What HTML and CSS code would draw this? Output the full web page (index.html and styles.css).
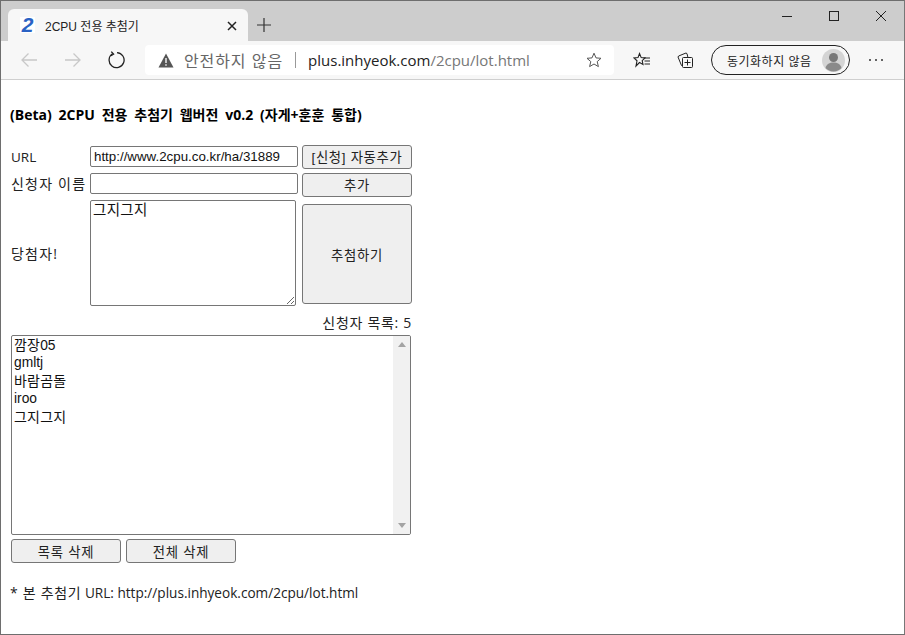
FILE: index.html
```html
<!DOCTYPE html>
<html lang="ko">
<head>
<meta charset="utf-8">
<title>2CPU 전용 추첨기</title>
<link rel="stylesheet" href="styles.css">
</head>
<body>
<div class="window">
  <div class="tabstrip">
    <div class="tab">
      <span class="favicon">2</span>
      <span class="tab-title">2CPU 전용 추첨기</span>
      <svg class="tab-close" width="10" height="10" viewBox="0 0 10 10"><path d="M1 1l8 8M9 1l-8 8" stroke="#222" stroke-width="1.5" fill="none"/></svg>
    </div>
    <svg class="newtab" width="14" height="14" viewBox="0 0 14 14"><path d="M7 0v14M0 7h14" stroke="#333" stroke-width="1.2" fill="none"/></svg>
    <div class="winctl">
      <svg width="12" height="12" viewBox="0 0 12 12"><path d="M1 6.500h10" stroke="#222" stroke-width="1"/></svg>
      <svg width="12" height="12" viewBox="0 0 12 12"><rect x="1.500" y="1.500" width="9" height="9" fill="none" stroke="#222" stroke-width="1"/></svg>
      <svg width="12" height="12" viewBox="0 0 12 12"><path d="M1 1l10 10M11 1L1 11" stroke="#222" stroke-width="1" fill="none"/></svg>
    </div>
  </div>
  <div class="toolbar">
    <svg class="nav-back" width="18" height="16" viewBox="0 0 18 16"><path d="M17 8H2M8.500 1.500L2 8l6.500 6.500" stroke="#c8c8c8" stroke-width="1.300" fill="none"/></svg>
    <svg class="nav-fwd" width="18" height="16" viewBox="0 0 18 16"><path d="M1 8h15M9.500 1.500L16 8l-6.500 6.500" stroke="#c8c8c8" stroke-width="1.300" fill="none"/></svg>
    <svg class="nav-reload" width="18" height="18" viewBox="0 0 18 18"><path d="M5.500 2.800A7.500 7.500 0 1 0 10 1.600" stroke="#222" stroke-width="1.300" fill="none"/><path d="M4.300 0.600L6.600 3.200 4 4.800" stroke="#222" stroke-width="1.300" fill="none"/></svg>
    <div class="addressbar">
      <svg width="16" height="15" viewBox="0 0 16 15"><path d="M8 0.500L15.500 14.500H.5z" fill="#555"/><path d="M8 5v5M8 11.300v1.500" stroke="#f7f7f7" stroke-width="1.400"/></svg>
      <span class="insecure">안전하지 않음</span>
      <span class="divider"></span>
      <span class="url">plus.inhyeok.com<span class="url-path">/2cpu/lot.html</span></span>
      <svg class="star" width="16" height="16" viewBox="0 0 16 16"><path d="M8 1.200l2 4.700 5 .4-3.800 3.300 1.200 5L8 12l-4.400 2.600 1.200-5L1 6.300l5-.4z" fill="none" stroke="#555" stroke-width="1"/></svg>
    </div>
    <svg class="favs" width="18" height="16" viewBox="0 0 18 16"><path d="M6.500 1.500L8.200 5.600 12 6 9.200 8.600 10 12.500 6.500 10.500 3 14l1-5.200L1 6l4-.4z" fill="none" stroke="#222" stroke-width="1.100"/><path d="M11 6h6M11.500 9h5.500M11.500 12h5.500" stroke="#222" stroke-width="1"/></svg>
    <svg class="collections" width="16" height="16" viewBox="0 0 16 16"><rect x="5.500" y="5.500" width="10" height="10" rx="1" fill="none" stroke="#222"/><path d="M10.500 7.500v6M7.500 10.500h6" stroke="#222"/><path d="M5.500 13.500H4.500L1 5l.6-1 7.400-3 1 .6.800 3.400" fill="none" stroke="#222"/></svg>
    <div class="profile">
      <span class="profile-text">동기화하지 않음</span>
      <svg class="avatar" width="23" height="23" viewBox="0 0 23 23"><circle cx="11.500" cy="11.500" r="11.500" fill="#d4d4d4"/><circle cx="11.500" cy="8.500" r="4.500" fill="#777"/><path d="M3.500 19c1-4 4-5.500 8-5.500s7 1.500 8 5.500a11 11 0 0 1-16 0z" fill="#8a8a8a"/></svg>
    </div>
    <span class="more"><i></i><i></i><i></i></span>
  </div>
  <main class="page">
    <h1 class="heading">(Beta) 2CPU 전용 추첨기 웹버전 v0.2 (자게+훈훈 통합)</h1>
    <div class="form">
      <div class="row row-url">
        <label class="label label-en">URL</label>
        <input class="field" type="text" value="http://www.2cpu.co.kr/ha/31889">
        <button class="btn btn-side">[신청] 자동추가</button>
      </div>
      <div class="row row-name">
        <label class="label">신청자 이름</label>
        <input class="field" type="text">
        <button class="btn btn-side">추가</button>
      </div>
      <div class="row row-win">
        <label class="label">당첨자!</label>
        <textarea class="winner">그지그지</textarea>
        <button class="btn btn-draw">추첨하기</button>
      </div>
      <div class="count">신청자 목록: 5</div>
      <div class="listbox">
        <div class="items">
          <div class="item item-ko">깜장<span class="digits">05</span></div>
          <div class="item">gmltj</div>
          <div class="item item-ko">바람곰돌</div>
          <div class="item">iroo</div>
          <div class="item item-ko">그지그지</div>
        </div>
        <div class="scrolltrack"><span class="arrow-up"></span><span class="arrow-down"></span></div>
      </div>
      <div class="actions">
        <button class="btn btn-act">목록 삭제</button>
        <button class="btn btn-act">전체 삭제</button>
      </div>
    </div>
    <p class="note"><span class="note-ko">* 본 추첨기</span> URL: http://plus.inhyeok.com/2cpu/lot.html</p>
  </main>
</div>
</body>
</html>
```
FILE: styles.css
```css
html, body { margin: 0; padding: 0; height: 100%; background: #fff; overflow: hidden; }
body { font-family: "Liberation Sans", "Noto Sans CJK KR", sans-serif; color: #111; }
.window { box-sizing: border-box; width: 905px; height: 635px; border: 1px solid #6e6e6e; border-right-color: #777; display: flex; flex-direction: column; }

.tabstrip { height: 40px; background: #cdcdcd; display: flex; align-items: flex-start; padding-left: 7px; flex: none; }
.tab { width: 240px; height: 32px; margin-top: 8px; background: #f7f7f7; border-radius: 6px 6px 0 0; display: flex; align-items: center; box-sizing: border-box; padding-left: 12px; }
.favicon { width: 15px; height: 16px; background: #fff; color: #2a62c4; font: italic bold 21px/16px "Liberation Sans", sans-serif; text-align: center; }
.tab-title { font-size: 12px; margin-left: 10px; color: #222; width: 182px; white-space: nowrap; flex: none; }
.tab-close { flex: none; margin-top: 1px; }
.newtab { margin: 17px 0 0 9px; }
.winctl { margin-left: auto; display: flex; gap: 35px; padding: 9px 17px 0 0; }
.winctl svg { display: block; }

.toolbar { height: 38px; background: #f7f7f7; border-bottom: 1px solid #cfcfcf; display: flex; align-items: center; flex: none; }
.nav-back { margin-left: 19px; }
.nav-fwd { margin-left: 26px; }
.nav-reload { margin-left: 25px; }
.addressbar { margin-left: 20px; width: 469px; height: 30px; background: #fff; border-radius: 4px; display: flex; align-items: center; padding-left: 13px; box-sizing: border-box; }
.insecure { font-size: 16px; color: #666; margin-left: 10px; letter-spacing: .9px; white-space: nowrap; }
.divider { width: 1px; height: 16px; background: #999; margin: 0 12px; flex: none; }
.url { font: 15px "Open Sans", sans-serif; color: #222; white-space: nowrap; }
.url-path { color: #777; }
.star { margin-left: auto; margin-right: 12px; }
.favs { margin-left: 19px; }
.collections { margin-left: 26px; }
.profile { margin-left: 18px; width: 139px; height: 30px; box-sizing: border-box; border: 1px solid #222; border-radius: 15px; display: flex; align-items: center; padding-left: 15px; }
.profile-text { font-size: 12px; letter-spacing: .5px; color: #222; white-space: nowrap; width: 95px; flex: none; }
.avatar { flex: none; }
.more { margin-left: 19px; display: flex; gap: 4px; }
.more i { width: 2px; height: 2px; background: #333; border-radius: 50%; display: block; }

.page { flex: 1; padding: 27px 0 0 8px; min-height: 0; }
.heading { font: bold 14px/16px "Open Sans", "Noto Sans CJK KR", sans-serif; word-spacing: 3.200px; margin: 0 0 23px 1px; color: #000; white-space: nowrap; }
.form { width: 404px; padding-left: 2px; }
.row { display: flex; align-items: center; }
.row-url { height: 24px; align-items: flex-start; }
.row-name { height: 27px; padding-top: 3px; box-sizing: border-box; align-items: flex-start; }
.row-win { height: 106px; margin-top: 3px; }
.label { width: 79px; flex: none; font: 14px/22px "Open Sans", "Noto Sans CJK KR", sans-serif; letter-spacing: 1.2px; color: #222; white-space: nowrap; }
.label-en { font-size: 13.500px; letter-spacing: 0; }
.row-win .label { margin-top: 2px; }
.field { box-sizing: border-box; width: 208px; height: 21px; padding: 0 3px; margin: 0; border: 1px solid #767676; border-radius: 2px; font: 13.330px "Liberation Sans", "Noto Sans CJK KR", sans-serif; color: #111; }
.btn { box-sizing: border-box; margin: 0; padding: 0; background: #efefef; border: 1px solid #767676; border-radius: 3px; font: 13.330px "Liberation Sans", "Noto Sans CJK KR", sans-serif; letter-spacing: .7px; color: #222; }
.btn-side { width: 110px; height: 24px; margin-left: 4px; padding-bottom: 2px; }
.row-url .btn-side { margin-top: -1px; }
.winner { box-sizing: border-box; width: 206px; height: 106px; margin: 0; padding: 2px; border: 1px solid #767676; border-radius: 2px; font: 14.500px/14px "Liberation Sans", "Noto Sans CJK KR", sans-serif; letter-spacing: .3px; color: #111; }
.btn-draw { width: 110px; height: 100px; margin: 4px 0 0 6px; align-self: flex-start; }
.count { width: 401px; text-align: right; font: 14px/18px "Open Sans", "Noto Sans CJK KR", sans-serif; letter-spacing: .7px; margin-top: 8px; color: #222; white-space: nowrap; }
.listbox { box-sizing: border-box; width: 400px; height: 200px; margin-top: 3px; border: 1px solid #767676; border-radius: 2px; display: flex; overflow: hidden; }
.items { flex: 1; padding: 0 2px; }
.item { font-size: 13.800px; height: 17px; line-height: 16px; color: #111; }
.item-ko { font-size: 14px; height: 19px; line-height: 19px; letter-spacing: .2px; }
.digits { font-size: 13.800px; letter-spacing: 0; }
.scrolltrack { width: 17px; background: #f1f1f1; position: relative; }
.arrow-up, .arrow-down { position: absolute; left: 5px; width: 0; height: 0; border-left: 4px solid transparent; border-right: 4px solid transparent; }
.arrow-up { top: 6px; border-bottom: 5px solid #a3a3a3; }
.arrow-down { bottom: 6px; border-top: 5px solid #a3a3a3; }
.actions { display: flex; gap: 5px; margin-top: 4px; }
.btn-act { width: 110px; height: 24px; }
.note { margin: 21px 0 0 1px; font: 13.600px/18px "Open Sans", "Noto Sans CJK KR", sans-serif; color: #222; white-space: nowrap; }
.note-ko { font-size: 14px; letter-spacing: .7px; }
```
